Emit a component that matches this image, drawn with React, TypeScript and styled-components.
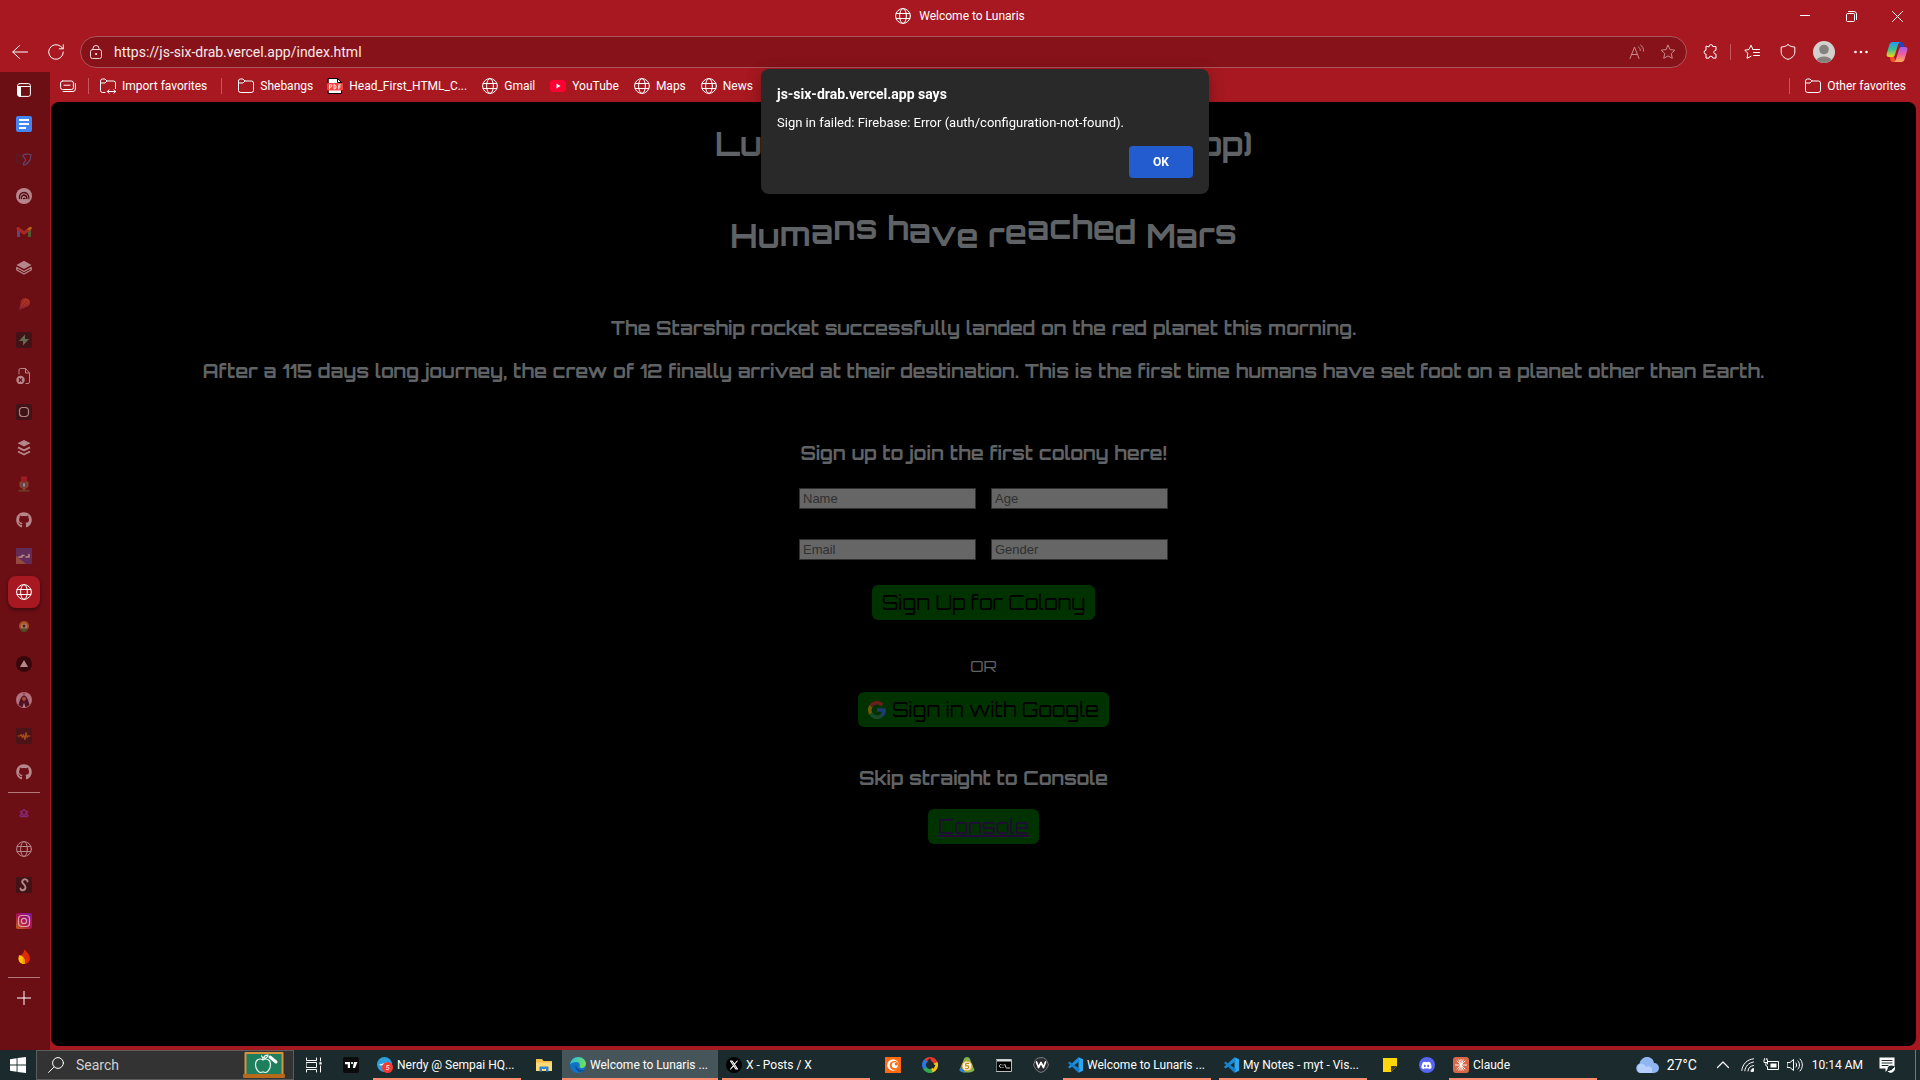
import React from "react";
import styled, { createGlobalStyle, css } from "styled-components";
import { FaGithub, FaDiscord } from "react-icons/fa";

const UI = `"Segoe UI", Roboto, "Open Sans", sans-serif`;
const SPACE = `Orbitron, "DejaVu Sans", sans-serif`;

const Global = createGlobalStyle`
  *, *::before, *::after { box-sizing: border-box; }
  html, body, #root { height: 100%; }
  body { margin: 0; overflow: hidden; background: #a71820; font-family: ${UI}; font-size: 12px; color: #fff; }
  button, input { font: inherit; }
  button { border: 0; padding: 0; background: none; color: inherit; }
  a { color: inherit; text-decoration: none; }
  svg { display: block; flex: none; }
  h1, h2, p { margin: 0; }
`;

/* ---------- shared drawing ---------- */

const Svg = styled.svg<{ $w?: number; $h?: number }>`
  width: ${(p) => p.$w ?? 16}px;
  height: ${(p) => p.$h ?? p.$w ?? 16}px;
  fill: none;
  stroke: currentColor;
  stroke-width: 1;
  stroke-linecap: round;
  stroke-linejoin: round;
`;

const Globe = () => (
  <Svg viewBox="0 0 16 16">
    <circle cx="8" cy="8" r="7.4" />
    <ellipse cx="8" cy="8" rx="3.4" ry="7.4" />
    <path d="M1.2 5.5h13.6M1.2 10.5h13.6" />
  </Svg>
);
const Folder = ({ arrows }: { arrows?: boolean }) => (
  <Svg viewBox="0 0 16 16">
    {arrows ? (
      <>
        <path d="M5 14.5H2.5a2 2 0 0 1-2-2V3a2 2 0 0 1 2-2H5l2 2h6.500a2 2 0 0 1 2 2v5.500" />
        <path d="M.5 5H5l2-2M7.500 13.500h8M9 11.800l-1.700 1.700L9 15.200M14 11.800l1.700 1.700-1.700 1.700" />
      </>
    ) : (
      <>
        <path d="M2.500 14.500a2 2 0 0 1-2-2V3a2 2 0 0 1 2-2H5l2 2h6.500a2 2 0 0 1 2 2v7.500a2 2 0 0 1-2 2z" />
        <path d="M.5 5H5l2-2" />
      </>
    )}
  </Svg>
);
const STAR = "M8 1.200l2.050 4.400 4.800.6-3.550 3.300.95 4.800L8 11.900l-4.250 2.400.95-4.800L1.150 6.200l4.800-.6z";

const EdgeLogo = () => (
  <Svg $w={16} viewBox="0 0 16 16" stroke="none">
    <defs>
      <linearGradient id="edgeTop" x1="0" y1="0" x2="1" y2=".4">
        <stop offset="0" stopColor="#29b6f0" />
        <stop offset="1" stopColor="#6be05a" />
      </linearGradient>
    </defs>
    <circle cx="8" cy="8" r="8" fill="#1173c8" stroke="none" />
    <path d="M0 7.500C.5 3 4 0 8 0c5 0 8 3.500 8 6.800 0 2.600-2 4.200-4.200 4.200-1.800 0-2.600-.6-2.300-1.200C10.500 8 9.500 5 6.500 5 3.500 5 .8 6 0 7.500z" fill="url(#edgeTop)" stroke="none" />
    <path d="M6 8c-1.500 2.500 0 6 3.500 7 2 .3 4-.8 5.200-2.500-3 1.300-8 .2-8.700-4.500z" fill="#0c4f9e" stroke="none" />
  </Svg>
);
const CodeLogo = () => (
  <Svg viewBox="0 0 16 16" stroke="none">
    <path d="M11.500.2 16 2.200v11.600l-4.500 2z" fill="#2ba7f2" stroke="none" />
    <path d="M11.500.2 1 10l1.500 1.500L13 4z" fill="#1b8fdd" stroke="none" />
    <path d="M11.500 15.800 1 6l1.500-1.500L13 12z" fill="#1680cc" stroke="none" />
  </Svg>
);

/* ---------- window frame ---------- */

const Window = styled.div`
  display: flex;
  flex-direction: column;
  height: 100vh;
`;
const TitleBar = styled.header`
  display: grid;
  grid-template-columns: 1fr auto 1fr;
  align-items: center;
  height: 32px;
`;
const WindowTitle = styled.div`
  display: flex;
  align-items: center;
  gap: 8px;
`;
const WindowButtons = styled.div`
  display: flex;
  justify-content: flex-end;
`;
const WindowButton = styled.button`
  display: grid;
  place-items: center;
  width: 46px;
  height: 32px;
`;
const Toolbar = styled.nav`
  display: flex;
  align-items: center;
  height: 40px;
  padding: 0 4px 0 2px;
`;
const ToolButton = styled.button<{ $w?: number; $dim?: boolean }>`
  display: grid;
  place-items: center;
  width: ${(p) => p.$w ?? 36}px;
  height: 30px;
  opacity: ${(p) => (p.$dim ? 0.6 : 1)};
`;
const Omnibox = styled.label`
  flex: 1;
  display: flex;
  align-items: center;
  height: 32px;
  margin: 0 6px;
  padding: 0 3px 0 8px;
  border: 1px solid #ab565b;
  border-radius: 16px;
  background: #871219;
  color: #f3dcdd;
`;
const Address = styled.input`
  flex: 1;
  min-width: 0;
  margin-left: 11px;
  padding: 0;
  border: 0;
  outline: 0;
  background: none;
  color: #f8e9ea;
  font-size: 14px;
`;
const Divider = styled.span<{ $left?: number; $right?: number }>`
  width: 1px;
  height: 16px;
  margin: 0 ${(p) => p.$right ?? 0}px 0 ${(p) => p.$left ?? 0}px;
  background: #c4585e;
`;
const Main = styled.div`
  flex: 1;
  min-height: 0;
  display: flex;
`;
const Column = styled.div`
  flex: 1;
  min-width: 0;
  display: flex;
  flex-direction: column;
  padding: 0 4px 4px 1px;
`;
const Favorites = styled.nav`
  display: flex;
  align-items: center;
  height: 30px;
  padding: 0 10px 2px 9px;
`;
const Favorite = styled.a<{ $gap?: number }>`
  display: flex;
  align-items: center;
  gap: 6px;
  margin-right: ${(p) => p.$gap ?? 15}px;
  white-space: nowrap;
`;
const Spacer = styled.span`
  flex: 1;
`;

/* ---------- vertical tabs ---------- */

const Sidebar = styled.aside`
  display: flex;
  flex-direction: column;
  align-items: center;
  width: 50px;
  padding-right: 2px;
  background: #6c0f15;
`;
const TabButton = styled.button<{ $active?: boolean; $bright?: boolean }>`
  display: grid;
  place-items: center;
  width: 32px;
  height: 32px;
  margin: 2px 0;
  border-radius: 8px;
  &:first-child {
    margin-bottom: 0;
  }
  ${(p) =>
    p.$active
      ? css`
          background: #a71820;
          box-shadow: 0 2px 4px rgba(0, 0, 0, 0.45);
        `
      : css`
          > svg {
            opacity: ${p.$bright ? 1 : 0.5};
          }
        `}
`;
const TabRule = styled.hr`
  width: 32px;
  height: 1px;
  margin: 2px 0;
  border: 0;
  background: #b4797c;
`;

/* ---------- web page ---------- */

const Page = styled.main`
  flex: 1;
  display: flex;
  flex-direction: column;
  align-items: center;
  padding-top: 22px;
  border-radius: 8px;
  background: #000;
  color: #606366;
  font-family: ${SPACE};
  font-size: 16px;
`;
const Heading = styled.h1`
  font-size: 32px;
  line-height: 40px;
`;
const WaveHeading = styled.h1`
  display: flex;
  margin-top: 52px;
  font-size: 32px;
  line-height: 40px;
  white-space: pre;
`;
const WaveLetter = styled.span<{ $lift: number }>`
  transform: translateY(${(p) => -p.$lift}px);
`;
const Lead = styled.h3<{ $top: number }>`
  margin: ${(p) => p.$top}px 0 0;
  line-height: 26px;
  text-align: center;
`;
const SignUp = styled.form`
  display: grid;
  grid-template-columns: 177px 177px;
  gap: 30px 15px;
  margin-top: 22px;
`;
const Field = styled.input`
  height: 21px;
  padding: 0 3px;
  border: 1px solid #303030;
  border-radius: 0;
  background: #666;
  color: #000;
  font-family: Arial, "Liberation Sans", sans-serif;
  font-size: 13px;
  &::placeholder {
    color: #303030;
    opacity: 1;
  }
`;
const greenBox = css`
  display: flex;
  align-items: center;
  justify-content: center;
  gap: 6px;
  height: 35px;
  padding: 0 10px;
  border-radius: 6px;
  background: #003200;
  font-family: ${SPACE};
  font-size: 20px;
`;
const GreenButton = styled.button<{ $top: number }>`
  ${greenBox}
  margin-top: ${(p) => p.$top}px;
  color: #000;
`;
const GreenLink = styled.a`
  ${greenBox}
  margin-top: 18px;
  color: #220b38;
  text-decoration: underline;
`;
const Or = styled.p`
  margin-top: 36px;
  line-height: 20px;
`;

/* ---------- alert ---------- */

const AlertLayer = styled.div`
  position: fixed;
  top: 69px;
  left: 50px;
  right: 0;
  display: flex;
  justify-content: center;
`;
const Alert = styled.section`
  display: flex;
  flex-direction: column;
  width: 448px;
  padding: 15px 16px 16px;
  border-radius: 8px;
  background: #292929;
  box-shadow: 0 4px 16px rgba(0, 0, 0, 0.3);
  line-height: 20px;
`;
const AlertTitle = styled.h2`
  font-size: 14px;
`;
const AlertText = styled.p`
  margin: 9px 0 13px;
  font-size: 13px;
`;
const AlertButton = styled.button`
  align-self: flex-end;
  width: 64px;
  height: 32px;
  border-radius: 4px;
  background: #235ccf;
  font-size: 12px;
  font-weight: 700;
`;

/* ---------- taskbar ---------- */

const Taskbar = styled.footer`
  display: flex;
  height: 30px;
  background: #1b2a2d;
`;
const StartButton = styled.button`
  display: grid;
  place-items: center;
  width: 36px;
`;
const TaskSearch = styled.label`
  display: flex;
  align-items: center;
  width: 258px;
  margin-right: 1px;
  padding: 0 8px 0 11px;
  border: 1px solid #5c5c5c;
  background: #333;
`;
const TaskSearchInput = styled.input`
  flex: 1;
  min-width: 0;
  margin-left: 12px;
  padding: 0;
  border: 0;
  background: none;
  font-size: 14px;
  &::placeholder {
    color: #d0d0d0;
    opacity: 1;
  }
`;
const TaskIcon = styled.button`
  display: grid;
  place-items: center;
  width: 37px;
`;
const Task = styled.button<{ $active?: boolean }>`
  display: flex;
  align-items: center;
  gap: 4px;
  width: ${(p) => (p.$active ? 156 : 148)}px;
  margin: 0 ${(p) => (p.$active ? 0 : 4)}px;
  padding-left: ${(p) => (p.$active ? 8 : 4)}px;
  border-bottom: 2px solid #ff8c70;
  padding-top: 2px;
  background: ${(p) => (p.$active ? "#46555a" : "transparent")};
  text-align: left;
  white-space: nowrap;
`;
const Blurple = styled.span`
  display: grid;
  place-items: center;
  width: 16px;
  height: 16px;
  border-radius: 8px;
  background: #5865f2;
`;
const Tray = styled.div`
  display: flex;
  align-items: center;
  margin-left: auto;
  margin-right: 4px;
  padding-right: 19px;
  border-right: 1px solid #6f7a7c;
`;
const TrayItem = styled.div<{ $gap: number; $big?: boolean }>`
  display: flex;
  align-items: center;
  gap: 8px;
  margin-right: ${(p) => p.$gap}px;
  font-size: ${(p) => (p.$big ? 14 : 12)}px;
  white-space: nowrap;
`;

/* ---------- data ---------- */

const WAVE: [string, number][] = [
  ["H", 0], ["u", 0], ["m", 2], ["a", 4], ["n", 8], ["s", 9], [" ", 0],
  ["h", 8], ["a", 5], ["v", 2], ["e", 0], [" ", 0],
  ["r", 1], ["e", 4], ["a", 8], ["c", 9], ["h", 9], ["e", 8], ["d", 4], [" ", 0],
  ["M", 0], ["a", 0], ["r", 1], ["s", 4],
];

const DARK = "#16181a";

const topTabs: { name: string; bright?: boolean; active?: boolean; icon: React.ReactNode }[] = [
  {
    name: "Docs", bright: true,
    icon: (
      <Svg viewBox="0 0 16 16">
        <rect width="16" height="16" rx="2" fill="#4285f4" stroke="none" />
        <path d="M3 4h10M3 8h10M3 12h7" strokeWidth="2" strokeLinecap="butt" />
      </Svg>
    ),
  },
  {
    name: "Map",
    icon: (
      <Svg viewBox="0 0 16 16">
        <path d="M.8 2.500 5 3.500v8.300L.8 10.500zM5 11.800l2 .8M13 11l2 1.500" stroke="#3b3038" strokeWidth="1.200" />
        <path d="M15 2.500c-2.500-.5-6-.8-8 .5-.5 2.500 3 3 2.500 5.500-.3 1.800-2.500 2-2 4.500 1.500 0 3-.2 3.500-1.500L14 8z" stroke="#5b78c0" strokeWidth="1.200" />
      </Svg>
    ),
  },
  {
    name: "Feed",
    icon: (
      <Svg viewBox="0 0 16 16">
        <circle cx="8" cy="8" r="8" fill="#fff" stroke="none" />
        <path d="M3.500 10.500V9a4.500 4.500 0 0 1 4.500-4.500A5 5 0 0 1 12.800 10.500M5.500 10.500a2.800 2.800 0 0 1 2.500-3.500 3.500 3.500 0 0 1 2.900 3.500M7.500 10.500a1 1 0 0 1 1.500 0" stroke="#3a0509" strokeWidth="1.300" />
      </Svg>
    ),
  },
  {
    name: "Gmail",
    icon: (
      <Svg viewBox="0 0 16 16">
        <path d="M2.500 13V5" stroke="#4285f4" strokeWidth="3" strokeLinecap="butt" />
        <path d="M13.500 13V5" stroke="#34a853" strokeWidth="3" strokeLinecap="butt" />
        <path d="M2 4.500l6 4.500 6-4.500" stroke="#ea4335" strokeWidth="3" />
        <path d="M13 5l1.500-1" stroke="#fbbc04" strokeWidth="2.500" />
      </Svg>
    ),
  },
  {
    name: "Stack",
    icon: (
      <Svg viewBox="0 0 16 16">
        <path d="M8 .8 15.500 5 8 9 .5 5z" fill="#fff" stroke="none" />
        <path d="M.8 7.500 8 11.500l7.200-4v2.500L8 14 .8 10z" strokeWidth="1.300" />
      </Svg>
    ),
  },
  {
    name: "Comet",
    icon: (
      <Svg viewBox="0 0 16 16">
        <path d="M5 4.500a5 5 0 0 1 9 1.500c0 3-2 4-4 5l-6.500 3z" fill="#f0541f" stroke="none" />
        <path d="M3 12l4-8M3.500 13.500l7-8M5 13l7-5" stroke="#6a2a8a" strokeWidth=".8" />
      </Svg>
    ),
  },
  {
    name: "Supabase",
    icon: (
      <Svg viewBox="0 0 16 16">
        <rect width="16" height="16" rx="2" fill={DARK} stroke="none" />
        <path d="M9 2.500 3 9h4v4.500L13 7H9z" fill="#5fc48c" stroke="none" />
      </Svg>
    ),
  },
  {
    name: "File",
    icon: (
      <Svg viewBox="0 0 16 16">
        <path d="M3 6V2a1.500 1.500 0 0 1 1.500-1.500H9.500L13.500 5v9a1.500 1.500 0 0 1-1.500 1.500H10M9.500.5V5h4" />
        <circle cx="4.500" cy="12" r="4.200" fill="#fff" stroke="none" />
        <path d="M3.300 10.800l2.400 2.400M5.700 10.800l-2.400 2.400" stroke="#6c0f15" strokeWidth="1.300" />
      </Svg>
    ),
  },
  {
    name: "Render",
    icon: (
      <Svg viewBox="0 0 16 16">
        <rect width="16" height="16" rx="2" fill={DARK} stroke="none" />
        <rect x="3.500" y="3.500" width="9" height="9" rx="3" strokeWidth="1.200" strokeDasharray="5 1" />
      </Svg>
    ),
  },
  {
    name: "Buffer",
    icon: (
      <Svg viewBox="0 0 16 16">
        <path d="M8 0l6.500 3.300L8 6.500 1.500 3.300z" fill="#fff" stroke="none" />
        <path d="M2 7.300l6 3 6-3M2 11.500l6 3 6-3" strokeWidth="1.900" strokeLinecap="butt" />
      </Svg>
    ),
  },
  {
    name: "Crest",
    icon: (
      <Svg viewBox="0 0 16 16">
        <path d="M5 .5h6V5H5z" fill="#d3283a" stroke="none" />
        <path d="M3.500 5.500h9v5L8 14.500l-4.500-4z" fill="#a07a3c" stroke="none" />
        <path d="M5.500 7h5v3L8 12.500 5.500 10z" fill="#4f7fa8" stroke="none" />
        <path d="M7 7.500h2v3H7z" fill="#eee" stroke="none" />
        <path d="M2.500 14h11v1.500h-11z" fill="#6a6d3c" stroke="none" />
      </Svg>
    ),
  },
  { name: "GitHub", icon: <FaGithub size={16} /> },
  {
    name: "Art",
    icon: (
      <Svg viewBox="0 0 16 16">
        <rect width="16" height="16" fill="#5a4a9c" stroke="none" />
        <path d="M0 16V8l10 8z" fill="#b88a6a" stroke="none" />
        <path d="M3 9h3V7.500h2M10 9h3V6.500" strokeWidth="1.600" />
      </Svg>
    ),
  },
  { name: "Welcome to Lunaris", active: true, icon: <Globe /> },
  {
    name: "Flower",
    icon: (
      <Svg viewBox="0 0 16 16">
        <circle cx="8" cy="6" r="5" fill="#e0901f" stroke="none" />
        <circle cx="8" cy="6.500" r="3.200" fill="#e8d8c0" stroke="none" />
        <circle cx="8" cy="6" r="1.500" fill="#5a2a1c" stroke="none" />
        <path d="M4 8.500h8L10 12H6z" fill="#2f8a3a" stroke="none" />
      </Svg>
    ),
  },
  {
    name: "Vercel",
    icon: (
      <Svg viewBox="0 0 16 16">
        <circle cx="8" cy="8" r="8" fill="#000" stroke="none" />
        <path d="M8 4l4 7H4z" fill="#fff" stroke="none" />
      </Svg>
    ),
  },
  {
    name: "Portrait",
    icon: (
      <Svg viewBox="0 0 16 16">
        <circle cx="8" cy="8" r="8" fill="#f6d4e4" stroke="none" />
        <path d="M2.500 13C3.500 9 5 3.500 8 3.500s4.500 5.500 5.500 9.500A8 8 0 0 1 2.500 13z" fill="#3a1430" stroke="none" />
        <circle cx="8" cy="6.800" r="2" fill="#d98a5a" stroke="none" />
        <path d="M8 10.500l1.500 5h-3z" fill="#fff" stroke="none" />
        <circle cx="8" cy="1.800" r="1.200" fill="#e07a8a" stroke="none" />
      </Svg>
    ),
  },
  {
    name: "Audio",
    icon: (
      <Svg viewBox="0 0 16 16">
        <rect width="16" height="16" fill="#2c1a1c" stroke="none" />
        <path d="M2 8h2l1-1.500L6.500 9.500 7.500 6.500l1.500 5L10 4.500l1 5 1-1.500h2" stroke="#f08a1c" strokeWidth="1.200" />
      </Svg>
    ),
  },
  { name: "GitHub repository", icon: <FaGithub size={16} /> },
];

const bottomTabs: { name: string; bright?: boolean; icon: React.ReactNode }[] = [
  {
    name: "Lotus",
    icon: (
      <Svg viewBox="0 0 16 16">
        <path d="M8 4.500 10 6v3L8 10.500 6 9V6zM4.500 6.500l1 2-1.500 2.500M11.500 6.500l-1 2L12 11M5 11.500h6" stroke="#9a3fd0" strokeWidth="1.500" />
      </Svg>
    ),
  },
  { name: "Web", icon: <Globe /> },
  {
    name: "Script",
    icon: (
      <Svg viewBox="0 0 16 16">
        <rect width="16" height="16" fill={DARK} stroke="none" />
        <path d="M11.500 4.500C11.500 2 8 1.500 6.500 3.500 4.500 6.500 10 7 9.500 10.500 9 14 4.500 14 4.500 11.500" strokeWidth="1.900" />
      </Svg>
    ),
  },
  {
    name: "Instagram", bright: true,
    icon: (
      <Svg viewBox="0 0 16 16">
        <defs>
          <linearGradient id="insta" x1="0" y1="1" x2=".8" y2="0">
            <stop offset="0" stopColor="#c46a10" />
            <stop offset=".5" stopColor="#b3124f" />
            <stop offset="1" stopColor="#84189a" />
          </linearGradient>
        </defs>
        <rect width="16" height="16" rx="2" fill="url(#insta)" stroke="none" />
        <rect x="2.500" y="2.500" width="11" height="11" rx="3" stroke="#dba0ac" strokeWidth="1.200" />
        <circle cx="8" cy="8" r="2.600" stroke="#dba0ac" strokeWidth="1.200" />
      </Svg>
    ),
  },
  {
    name: "Firebase", bright: true,
    icon: (
      <Svg viewBox="0 0 16 16">
        <path d="M8.500.5c3 3 5.500 6 5.500 9.500A5.700 5.700 0 0 1 8 15C5 15 5 9 5 6c1 0 2.500-2 3.500-5.500z" fill="#dd2c00" stroke="none" />
        <path d="M3.500 6C2 8 2 11 3.500 13c1.500 1.800 3.500 2.200 5 2C9.500 12 8 7 3.500 6z" fill="#ffc400" stroke="none" />
        <path d="M8.500 15c.8-2.500.2-5-1.500-7l-.5 6z" fill="#ff9100" stroke="none" />
      </Svg>
    ),
  },
];

const Telegram = () => (
  <Svg viewBox="0 0 16 16">
    <circle cx="7.500" cy="7.500" r="7.500" fill="#2aa1de" stroke="none" />
    <path d="M1.500 8 9 5.500V9z" fill="#fff" stroke="none" />
    <circle cx="10.500" cy="10.500" r="5.500" fill="#f23c34" stroke="none" />
    <path d="M12 8.500H9.800l-.2 1.800c1.500-.4 2.500.1 2.400 1.200-.1 1.200-1.500 1.500-2.600.9" strokeWidth=".8" />
  </Svg>
);

export default function App() {
  return (
    <Window>
      <Global />
      <TitleBar>
        <span />
        <WindowTitle>
          <Globe />
          Welcome to Lunaris
        </WindowTitle>
        <WindowButtons>
          <WindowButton aria-label="Minimize">
            <Svg $w={10} viewBox="0 0 10 10"><path d="M0 4.500h10" /></Svg>
          </WindowButton>
          <WindowButton aria-label="Restore">
            <Svg $w={11} viewBox="0 0 11 11"><rect x=".5" y="2.500" width="8" height="8" rx="1" /><path d="M2.500.5H8a2.500 2.500 0 0 1 2.500 2.500v5.500" /></Svg>
          </WindowButton>
          <WindowButton aria-label="Close">
            <Svg $w={11} viewBox="0 0 11 11"><path d="M.5.5l10 10M10.500.5l-10 10" /></Svg>
          </WindowButton>
        </WindowButtons>
      </TitleBar>

      <Toolbar>
        <ToolButton aria-label="Back">
          <Svg viewBox="0 0 16 16"><path d="M15.500 8H.8M7.500 1.500.8 8l6.700 6.500" /></Svg>
        </ToolButton>
        <ToolButton aria-label="Refresh">
          <Svg viewBox="0 0 16 16"><path d="M15.300 8A7.300 7.300 0 1 1 12.800 2.500L15 4.500M15.300.8v4h-4" /></Svg>
        </ToolButton>
        <Omnibox>
          <Svg $w={14} viewBox="0 0 14 14"><rect x="1.500" y="4.500" width="11" height="9" rx="2" /><path d="M4 4.500V3.500a3 3 0 0 1 6 0v1" /><circle cx="7" cy="9" r=".6" fill="currentColor" /></Svg>
          <Address aria-label="Address" defaultValue="https://js-six-drab.vercel.app/index.html" />
          <ToolButton $w={32} $dim aria-label="Read aloud">
            <Svg viewBox="0 0 16 16"><path d="M1 14.500 5.500 3l4.500 11.500M2.500 10.500h6M9.500 3c1.200.8 1.800 2 1.800 3.500M11.500 1c2 1.200 3.200 3.500 3 6" /></Svg>
          </ToolButton>
          <ToolButton $w={30} $dim aria-label="Add to favorites">
            <Svg viewBox="0 0 16 16"><path d={STAR} /></Svg>
          </ToolButton>
        </Omnibox>
        <ToolButton aria-label="Extensions">
          <Svg viewBox="0 0 16 16"><path d="M6 2.500a1.900 1.900 0 0 1 3.800 0h3.200v3.800c-3 0-3 3.800 0 3.800v4H9.800a1.900 1.900 0 0 0-3.800 0H3v-4a1.900 1.900 0 0 1 0-3.800V2.500z" /></Svg>
        </ToolButton>
        <Divider $left={1} $right={1} />
        <ToolButton $w={40} aria-label="Favorites">
          <Svg viewBox="0 0 16 16"><path d="M9 5.500 7 1.200 5 5.500.8 6.200 3.800 9.200 3 14.300l4-2M9 5.500h6.500M9.500 8.500h6M9.500 11.500h6" /></Svg>
        </ToolButton>
        <ToolButton $w={32} aria-label="Security">
          <Svg viewBox="0 0 16 16"><path d="M8 .6c2 1.700 4.200 2.300 6.800 2.400V8c0 3.500-2.600 6-6.800 7.400C3.800 14 1.200 11.500 1.200 8V3C3.800 2.900 6 2.300 8 .6z" /></Svg>
        </ToolButton>
        <ToolButton $w={40} aria-label="Profile">
          <Svg $w={22} viewBox="0 0 22 22">
            <circle cx="11" cy="11" r="11" fill="#d3d1ce" stroke="none" />
            <circle cx="11" cy="8.500" r="4.800" fill="#85827e" stroke="none" />
            <path d="M3.500 19a8 5.500 0 0 1 15 0A11 11 0 0 1 3.500 19z" fill="#85827e" stroke="none" />
          </Svg>
        </ToolButton>
        <ToolButton $w={34} aria-label="Settings and more">
          <Svg viewBox="0 0 16 16"><path d="M2.500 8h.01M8 8h.01M13.500 8h.01" strokeWidth="2.600" /></Svg>
        </ToolButton>
        <ToolButton $w={38} aria-label="Copilot">
          <Svg $w={22} viewBox="0 0 22 22">
            <defs>
              <linearGradient id="copA" x1="0" y1="0" x2="0" y2="1">
                <stop offset="0" stopColor="#1b9cf5" />
                <stop offset=".5" stopColor="#3dbf8f" />
                <stop offset="1" stopColor="#f6d21c" />
              </linearGradient>
              <linearGradient id="copB" x1="0" y1="0" x2="0" y2="1">
                <stop offset="0" stopColor="#a45cf0" />
                <stop offset=".5" stopColor="#ee5fa0" />
                <stop offset="1" stopColor="#ffb057" />
              </linearGradient>
            </defs>
            <path d="M12 1h3.500c1.200 0 1.800 1 2.200 2.200L18.500 6h-4z" fill="#1c45c8" stroke="none" />
            <path d="M10 21H6.500c-1.200 0-1.800-1-2.200-2.200L3.800 16H8z" fill="#f0502c" stroke="none" />
            <path d="M6.500 1h8c-1.500.3-2 1.500-2.500 3L9 13.500C8.500 15 8 16 6.500 16H3C.8 16 .2 14.500.8 12.500l2.500-8.500C4 2 5 1 6.500 1z" fill="url(#copA)" stroke="none" />
            <path d="M15.500 21h-8c1.500-.3 2-1.500 2.500-3l3-9.500C13.500 7 14 6 15.500 6H19c2.200 0 2.800 1.500 2.200 3.500L18.700 18c-.7 2-1.700 3-3.200 3z" fill="url(#copB)" stroke="none" />
          </Svg>
        </ToolButton>
      </Toolbar>

      <Main>
        <Sidebar>
          <TabButton $bright aria-label="Tab actions">
            <Svg $w={14} viewBox="0 0 14 14"><rect x=".6" y=".6" width="12.800" height="12.800" rx="2" /><path d="M1 3.500h12" /><path d="M1 3.500h2.500v10h-1L1 12z" fill="#fff" /></Svg>
          </TabButton>
          {topTabs.map((t) => (
            <TabButton key={t.name} $active={t.active} $bright={t.bright} aria-label={t.name}>{t.icon}</TabButton>
          ))}
          <TabRule />
          {bottomTabs.map((t) => (
            <TabButton key={t.name} $bright={t.bright} aria-label={t.name}>{t.icon}</TabButton>
          ))}
          <TabRule />
          <TabButton $bright aria-label="New tab">
            <Svg $w={14} viewBox="0 0 14 14"><path d="M7 0v14M0 7h14" /></Svg>
          </TabButton>
        </Sidebar>

        <Column>
          <Favorites>
            <Favorite href="#workspaces" aria-label="Workspaces" $gap={8}>
              <Svg viewBox="0 0 16 16"><rect x=".6" y="3" width="12.800" height="8.500" rx="2" /><path d="M4 7.200h6M15.400 5.500v5.500a2.500 2.500 0 0 1-2.500 2.500H3" /></Svg>
            </Favorite>
            <Divider $left={4} $right={11} />
            <Favorite href="#import" $gap={14}><Folder arrows />Import favorites</Favorite>
            <Divider $right={16} />
            <Favorite href="#shebangs" $gap={14}><Folder />Shebangs</Favorite>
            <Favorite href="#pdf">
              <Svg viewBox="0 0 16 16">
                <path d="M1.500.5h9l4 4v11h-13z" fill="#fff" stroke="#000" />
                <path d="M10.500.5v4h4" stroke="#000" />
                <rect y="5" width="16" height="7.500" rx="1" fill="#f2443e" stroke="none" />
                <path d="M2.500 11V6.800h1.300a1 1 0 0 1 0 2.200H2.500M7 6.800V11h.8c1.600 0 1.600-4.200 0-4.200zM11.800 11V6.800h2M11.800 8.900h1.500" strokeWidth=".9" />
              </Svg>
              Head_First_HTML_C...
            </Favorite>
            <Favorite href="#gmail"><Globe />Gmail</Favorite>
            <Favorite href="#youtube">
              <Svg viewBox="0 0 16 16"><rect y="2" width="16" height="12" rx="3" fill="#ff0033" stroke="none" /><path d="M6.500 5.500v5L10.500 8z" fill="#fff" stroke="none" /></Svg>
              YouTube
            </Favorite>
            <Favorite href="#maps"><Globe />Maps</Favorite>
            <Favorite href="#news"><Globe />News</Favorite>
            <Spacer />
            <Divider $right={15} />
            <Favorite href="#other" $gap={0}><Folder />Other favorites</Favorite>
          </Favorites>

          <Page>
            <Heading>Lunaris (Mars Colonizers App)</Heading>
            <WaveHeading>
              {WAVE.map(([ch, lift], i) => (
                <WaveLetter key={i} $lift={lift}>{ch}</WaveLetter>
              ))}
            </WaveHeading>
            <Lead $top={59}>The Starship rocket successfully landed on the red planet this morning.</Lead>
            <Lead $top={17}>
              After a 115 days long journey, the crew of 12 finally arrived at their destination. This is the first time humans have set foot on a planet other than Earth.
            </Lead>
            <Lead $top={56}>Sign up to join the first colony here!</Lead>
            <SignUp id="signup" onSubmit={(e) => e.preventDefault()}>
              <Field placeholder="Name" aria-label="Name" />
              <Field placeholder="Age" aria-label="Age" />
              <Field placeholder="Email" aria-label="Email" />
              <Field placeholder="Gender" aria-label="Gender" />
            </SignUp>
            <GreenButton form="signup" type="submit" $top={25}>Sign Up for Colony</GreenButton>
            <Or>OR</Or>
            <GreenButton type="button" $top={16}>
              <Svg $w={18} viewBox="0 0 18 18">
                <g strokeWidth="3.600" strokeLinecap="butt" fill="none">
                  <path d="M14.300 4A7.200 7.200 0 0 0 2.900 5.200" stroke="#6a1f1a" />
                  <path d="M2.900 5.200a7.200 7.200 0 0 0 0 7.600" stroke="#6b5a05" />
                  <path d="M2.900 12.800a7.200 7.200 0 0 0 10.700 1.800" stroke="#1a4a2c" />
                  <path d="M13.600 14.600A7.200 7.200 0 0 0 16.200 9H9" stroke="#1d3a72" />
                </g>
              </Svg>
              Sign in with Google
            </GreenButton>
            <Lead $top={38}>Skip straight to Console</Lead>
            <GreenLink href="#console">Console</GreenLink>
          </Page>
        </Column>
      </Main>

      <AlertLayer>
        <Alert role="alertdialog" aria-labelledby="alert-title">
          <AlertTitle id="alert-title">js-six-drab.vercel.app says</AlertTitle>
          <AlertText>Sign in failed: Firebase: Error (auth/configuration-not-found).</AlertText>
          <AlertButton>OK</AlertButton>
        </Alert>
      </AlertLayer>

      <Taskbar>
        <StartButton aria-label="Start">
          <Svg viewBox="0 0 16 16"><path d="M0 2.200 6.600 1.200v6.300H0zM7.500 1.100 16 0v7.500H7.500zM0 8.500h6.600v6.300L0 13.800zM7.500 8.500H16V16l-8.500-1.100z" fill="#fff" stroke="none" /></Svg>
        </StartButton>
        <TaskSearch>
          <Svg viewBox="0 0 16 16"><circle cx="10" cy="6" r="5.400" /><path d="M6 10 .6 15.400" /></Svg>
          <TaskSearchInput placeholder="Search" aria-label="Search" />
          <Svg $w={42} $h={26} viewBox="0 0 42 26">
            <rect x="2.500" y="1" width="37" height="22" fill="#1e7f5f" stroke="#d9913c" strokeWidth="2" />
            <rect y="22" width="42" height="4" rx="1" fill="#b86a1c" stroke="none" />
            <path d="M20 8c-3-2-7.500-1-7.500 4.500 0 4.500 3 8 5 8 1 0 1.500-.6 2.500-.6s1.500.6 2.500.6c2 0 5-3.500 5-8C27.500 7 23 6 20 8zM20 8c0-2 0-3-1.500-4M20.500 6c1-2.500 3-3 4.500-2.800C24.500 5.500 22.500 6.500 20.500 6" stroke="#e6f5ea" strokeWidth="1.200" />
            <path d="M27 5l6 5" stroke="#fff" strokeWidth="3" />
          </Svg>
        </TaskSearch>
        <TaskIcon aria-label="Task view">
          <Svg viewBox="0 0 16 16"><path d="M.5 1v2.500h10V1M.5 5.500h10v5H.5zM.5 15v-2.500h10V15M14.500 1v3M14.500 9v6" /><path d="M14.500 5.200v2.300" strokeWidth="2.200" strokeLinecap="butt" /></Svg>
        </TaskIcon>
        <TaskIcon aria-label="TradingView">
          <Svg viewBox="0 0 16 16"><rect width="16" height="16" rx="2" fill="#0b0b0d" stroke="none" /><path d="M2 5h5v6H4.800V7.200H2zM11 5h3.500L12 11H9.800z" fill="#fff" stroke="none" /><circle cx="9" cy="6.100" r="1.100" fill="#fff" stroke="none" /></Svg>
        </TaskIcon>
        <Task><Telegram />Nerdy @ Sempai HQ...</Task>
        <TaskIcon aria-label="File Explorer">
          <Svg viewBox="0 0 16 16"><path d="M0 2h6l1.500 2H16v10H0z" fill="#f4c04a" stroke="none" /><path d="M0 5.500h16V14H0z" fill="#ffdb77" stroke="none" /><path d="M3.500 9.500h9v5H10v-2.500H6v2.500H3.500z" fill="#2f86d6" stroke="none" /></Svg>
        </TaskIcon>
        <Task $active><EdgeLogo />Welcome to Lunaris ...</Task>
        <Task>
          <Svg viewBox="0 0 16 16"><circle cx="8" cy="8" r="8" fill="#000" stroke="none" /><path d="M4.500 4h1.700l5.300 8H9.800zM11.200 4 8.600 7M7.300 8.800 4.600 12" strokeWidth="1.100" /></Svg>
          X - Posts / X
        </Task>
        <TaskIcon aria-label="Crunchyroll">
          <Svg viewBox="0 0 16 16"><rect width="16" height="16" fill="#ff6a13" stroke="none" /><circle cx="8" cy="8" r="5.800" fill="#fff" stroke="none" /><circle cx="9.300" cy="8.500" r="4.600" fill="#ff6a13" stroke="none" /><circle cx="9.800" cy="8.300" r="3" fill="#fff" stroke="none" /><circle cx="11.200" cy="7" r="1.500" fill="#ff6a13" stroke="none" /></Svg>
        </TaskIcon>
        <TaskIcon aria-label="Browser">
          <Svg viewBox="0 0 16 16">
            <g strokeWidth="4" strokeLinecap="butt">
              <path d="M13.500 5.500A6 6 0 0 1 9 13.900" stroke="#f7c21a" />
              <path d="M10 13.700A6 6 0 0 1 2.800 11" stroke="#33a852" />
              <path d="M3 11.300A6 6 0 0 1 4.500 3.200" stroke="#2a78e4" />
              <path d="M4 3.600A6 6 0 0 1 13.500 5.700" stroke="#e8382c" />
            </g>
            <path d="M5 4 10 5.500 8 1zM11.500 12 9.500 7l4 1z" fill="#1b2a2d" stroke="none" />
          </Svg>
        </TaskIcon>
        <TaskIcon aria-label="Notifications: 5">
          <Svg viewBox="0 0 16 16"><path d="M8 0c3 0 3.500 3 4 5l3.500 8c-1 2-4 2.500-7.500 2.500S1.500 15 .5 13L4 5c.5-2 1-5 4-5z" fill="#7fb54a" stroke="none" /><path d="M.5 13C1.500 15 4 15.500 6 15.500L3 8z" fill="#2f7fd0" stroke="none" /><circle cx="8" cy="9" r="5" fill="#fff6dc" stroke="#d9a02c" /><path d="M9.800 6.300H6.900L6.600 9c2-.7 3.200 0 3.100 1.300-.1 1.500-2 1.800-3.200 1" stroke="#c88a14" strokeWidth="1.200" /></Svg>
        </TaskIcon>
        <TaskIcon aria-label="Command Prompt">
          <Svg viewBox="0 0 16 16"><rect x=".5" y="2.500" width="15" height="12" fill="#000" stroke="#b9bec2" /><path d="M1 3.500h14" stroke="#d8dcdf" strokeWidth="2" strokeLinecap="butt" /><path d="M5 7.500c-2-.6-2.500 3.500 0 3M7 8v.1M7 10.500v.1M8.800 7.500l1.500 3.500M11.500 11h2" strokeWidth=".9" /></Svg>
        </TaskIcon>
        <TaskIcon aria-label="Wallet">
          <Svg viewBox="0 0 16 16"><path d="M4 1.500C6 .3 10 .3 12 1.500L14 4l1.500 4L14 11l-2.500 3L8 15.500 4.500 14 2 11 .5 8 2 4z" fill="#2b2d31" stroke="#777c82" /><path d="M3.500 5l2 5.500L8 5.500l2.500 5 2-5.500" strokeWidth="1.700" /></Svg>
        </TaskIcon>
        <Task><CodeLogo />Welcome to Lunaris ...</Task>
        <Task><CodeLogo />My Notes - myt - Vis...</Task>
        <TaskIcon aria-label="Sticky Notes">
          <Svg viewBox="0 0 16 16"><path d="M1 1h14v8L9 15H1z" fill="#ffd60a" stroke="none" /><path d="M15 9H9v6z" fill="#3c3a30" stroke="none" /></Svg>
        </TaskIcon>
        <TaskIcon aria-label="Discord">
          <Blurple><FaDiscord size={11} /></Blurple>
        </TaskIcon>
        <Task>
          <Svg viewBox="0 0 16 16"><rect width="16" height="16" rx="3" fill="#d9684a" stroke="none" /><path d="M8 2.500v11M2.500 8h11M4 4l8 8M12 4l-8 8M5.800 2.800l4.400 10.400M10.200 2.800 5.800 13.200" strokeWidth=".9" /></Svg>
          Claude
        </Task>
        <Tray>
          <TrayItem $gap={20} $big>
            <Svg $w={24} $h={16} viewBox="0 0 24 16"><path d="M5 16a5 5 0 0 1-.5-9.500C5.500 2.500 8.500 0 12 0c4 0 6.500 2.500 7 6a5 5 0 0 1 0 10z" fill="#8fb6f0" stroke="none" /><path d="M5 16a5 5 0 0 1 0-9c3-1 5 1 6 3 2-1.500 5-1 6 1.500V16z" fill="#b4d0fa" stroke="none" /></Svg>
            27°C
          </TrayItem>
          <TrayItem $gap={12}>
            <Svg $w={12} viewBox="0 0 12 12"><path d="M.5 8.500 6 3l5.500 5.500" strokeWidth="1.200" /></Svg>
          </TrayItem>
          <TrayItem $gap={8}>
            <Svg $w={14} viewBox="0 0 14 14"><path d="M.8 12.500C1.500 6 6 1.500 12.500.8M3.800 12.800C4.500 8 7.500 4.800 12.500 4M7 13c.3-3 2-5 5.500-5.500" /><path d="M10 13c.2-1.200 1-2.200 2.500-2.500V13z" fill="#fff" /></Svg>
          </TrayItem>
          <TrayItem $gap={8}>
            <Svg viewBox="0 0 16 16"><path d="M4.500 7V4.500h11v8h-11V10" /><path d="M7.500 6.500h6v4h-6z" fill="#fff" stroke="none" /><path d="M1 3v2.500h3.500V3M2.800 5.500V8a1.500 1.500 0 0 0 1.500 1.500M1.700 2.800V1.500M3.800 2.800V1.500" /></Svg>
          </TrayItem>
          <TrayItem $gap={9}>
            <Svg viewBox="0 0 16 16"><path d="M.5 5.500H3l3.500-3v11L3 10.500H.5zM9 6c.8 1 .8 3 0 4M11 4c2 2 2 6 0 8M13 2c3.200 3 3.200 9 0 12" /></Svg>
          </TrayItem>
          <TrayItem $gap={16}>10:14 AM</TrayItem>
          <TrayItem $gap={0}>
            <Svg $w={17} viewBox="0 0 17 17"><path d="M.5.5h15v11h-6l-3 3.500v-3.500h-6z" fill="#fff" stroke="none" /><path d="M3 3.500h10M3 6h10M3 8.500h6" stroke="#1b2a2d" /><circle cx="12.500" cy="12.500" r="4" fill="#1b2a2d" stroke="none" /><path d="M9.500 14.500c2 2 6.500.5 6-4-2 3-4 3.500-6 4z" fill="#fff" stroke="#fff" /></Svg>
          </TrayItem>
        </Tray>
      </Taskbar>
    </Window>
  );
}
